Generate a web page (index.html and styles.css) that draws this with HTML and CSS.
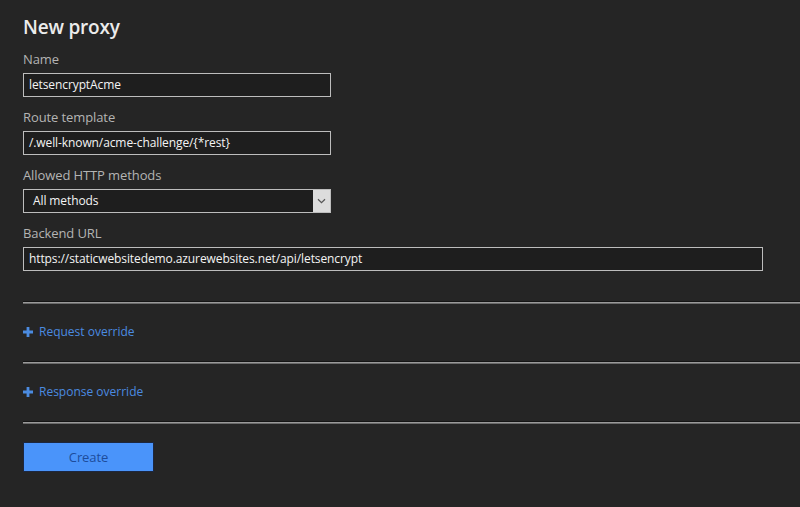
FILE: index.html
```html
<!DOCTYPE html>
<html lang="en">
  <head>
    <meta charset="UTF-8" />
    <meta name="viewport" content="width=device-width, initial-scale=1.0" />
    <title>New proxy</title>
    <link rel="stylesheet" href="styles.css">
  </head>
  <body>
    <div class="blade">
      <h1 class="title">New proxy</h1>

      <div class="field">
        <label class="field-label">Name</label>
        <div class="textbox">letsencryptAcme</div>
      </div>

      <div class="field">
        <label class="field-label">Route template</label>
        <div class="textbox">/.well-known/acme-challenge/{*rest}</div>
      </div>

      <div class="field">
        <label class="field-label">Allowed HTTP methods</label>
        <div class="textbox dropdown">
          <span class="dropdown-value">All methods</span>
          <span class="dropdown-button">
            <svg width="9" height="6" viewBox="0 0 9 6">
              <path d="M1 1.2 L4.5 4.6 L8 1.2" fill="none" stroke="#555" stroke-width="1.2"></path>
            </svg>
          </span>
        </div>
      </div>

      <div class="field">
        <label class="field-label">Backend URL</label>
        <div class="textbox textbox-wide">https://staticwebsitedemo.azurewebsites.net/api/letsencrypt</div>
      </div>

      <!-- overrides -->
      <div class="divider"></div>
      <div class="override">
        <svg class="plus" width="10" height="10" viewBox="0 0 10 10">
          <path d="M3.6 0h2.8v3.6H10v2.8H6.4V10H3.6V6.4H0V3.6h3.6z"></path>
        </svg>
        <span>Request override</span>
      </div>
      <div class="divider"></div>
      <div class="override">
        <svg class="plus" width="10" height="10" viewBox="0 0 10 10">
          <path d="M3.6 0h2.8v3.6H10v2.8H6.4V10H3.6V6.4H0V3.6h3.6z"></path>
        </svg>
        <span>Response override</span>
      </div>
      <div class="divider"></div>

      <div class="actions">
        <button class="btn-create">Create</button>
      </div>
    </div>
  </body>
</html>
```

FILE: styles.css
```css
body {
  margin: 0;
  padding: 0;
  background-color: #252525;
  color: #f0f0f0;
  font: 13px/16px 'Open Sans', 'Liberation Sans', sans-serif;
}

.blade {
  padding: 14px 0 0 23px;
}

.title {
  margin: 0;
  font-size: 19px;
  line-height: 26px;
  font-weight: 600;
  color: #ececec;
  letter-spacing: -0.2px;
}

.field {
  display: flex;
  flex-direction: column;
  align-items: flex-start;
}

.field-label {
  padding-top: 11px;
  margin-bottom: 6px;
  font-size: 13px;
  line-height: 16px;
  color: #b4b4b4;
  letter-spacing: -0.1px;
}

.field + .field .field-label {
  padding-top: 12px;
}

.textbox {
  box-sizing: border-box;
  width: 308px;
  height: 24px;
  padding: 0 0 0 5px;
  border: 1px solid #bdbdbd;
  background-color: #1e1e1e;
  color: #f4f4f4;
  font-size: 12px;
  line-height: 22px;
  letter-spacing: -0.1px;
  white-space: nowrap;
}

.textbox-wide {
  width: 740px;
}

.dropdown {
  display: flex;
  justify-content: space-between;
  padding-right: 0;
}

.dropdown-value {
  padding-left: 4px;
  line-height: 22px;
}

.dropdown-button {
  width: 17px;
  display: flex;
  justify-content: center;
  align-items: center;
  background-color: #dcdcdc;
}

.divider {
  margin-top: 30px;
  height: 1px;
  border-top: 1px solid #141414;
  background-color: #9a9a9a;
  box-shadow: 0 1px 0 #6a6a6a;
}

.override {
  display: flex;
  align-items: center;
  gap: 6px;
  height: 58px;
  color: #4b8be0;
  font-size: 12px;
  letter-spacing: 0;
}

.override + .divider {
  margin-top: 0;
}

.plus {
  fill: #4b8be0;
}

.actions {
  padding-top: 19px;
}

.btn-create {
  width: 131px;
  height: 30px;
  border: 1px solid #1c2740;
  background-color: #4a94fa;
  color: #1d4c9a;
  font: 13px 'Open Sans', 'Liberation Sans', sans-serif;
  letter-spacing: -0.1px;
}
```
